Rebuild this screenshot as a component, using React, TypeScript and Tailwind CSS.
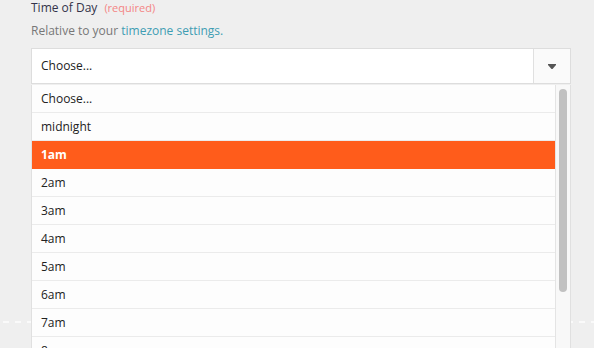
import React from "react";

const items = ["Choose...", "midnight", "1am", "2am", "3am", "4am", "5am", "6am", "7am", "8am", "9am"];

export default function App() {
  return (
    <div
      className="relative w-[594px] h-[348px] overflow-hidden bg-[#efefef]"
      style={{ fontFamily: '"Open Sans", "Liberation Sans", sans-serif' }}
    >
      <div className="pl-[31px] pr-[23px]">
        <div className="flex items-baseline gap-[7px] pt-0 text-[12px] leading-[16px]">
          <span className="text-[#33334a]">Time of Day</span>
          <span className="text-[11px] text-[#f48585]">(required)</span>
        </div>
        <div className="mt-[7px] text-[12px] leading-[16px] text-[#777777]">
          Relative to your <span className="text-[#3e9db3]">timezone settings.</span>
        </div>
        <div className="relative mt-[9px]">
          <div className="flex h-[36px] border border-[#dddddd] bg-white">
            <div className="flex flex-1 items-center pl-[9px] text-[12px] text-[#222222]">Choose...</div>
            <div className="flex w-[37px] items-center justify-center border-l border-[#e0e0e0] bg-[#fafafa]">
              <svg width="8" height="5" viewBox="0 0 8 5">
                <path d="M0 0H8V1L4.5 5H3.5L0 1Z" fill="#555555" />
              </svg>
            </div>
          </div>
          <div className="absolute left-0 right-0 top-[37px] z-10 flex h-[300px] border-x border-[#e0e0e0] bg-[#fdfdfd]">
            <div className="flex-1">
              {items.map((it) => {
                const sel = it === "1am";
                return (
                  <div
                    key={it}
                    className={
                      sel
                        ? "flex h-[28px] items-center border-b border-[#ff5c1b] bg-[#ff5c1b] pl-[9px] text-[12px] font-bold text-white"
                        : "flex h-[28px] items-center border-b border-[#ebebeb] bg-[#fdfdfd] pl-[9px] text-[12px] text-[#222222]"
                    }
                  >
                    {it}
                  </div>
                );
              })}
            </div>
            <div className="w-[15px] border-l border-[#e4e4e4] bg-[#f8f8f8] pl-[3px] pt-[4px]">
              <div className="h-[203px] w-[8px] rounded-full bg-[#c1c1c1]" />
            </div>
          </div>
        </div>
      </div>
      <div className="mt-[237px] ml-[3px] h-[2px] bg-[image:repeating-linear-gradient(90deg,#fafafa_0_6px,transparent_6px_12px)]" />
    </div>
  );
}
